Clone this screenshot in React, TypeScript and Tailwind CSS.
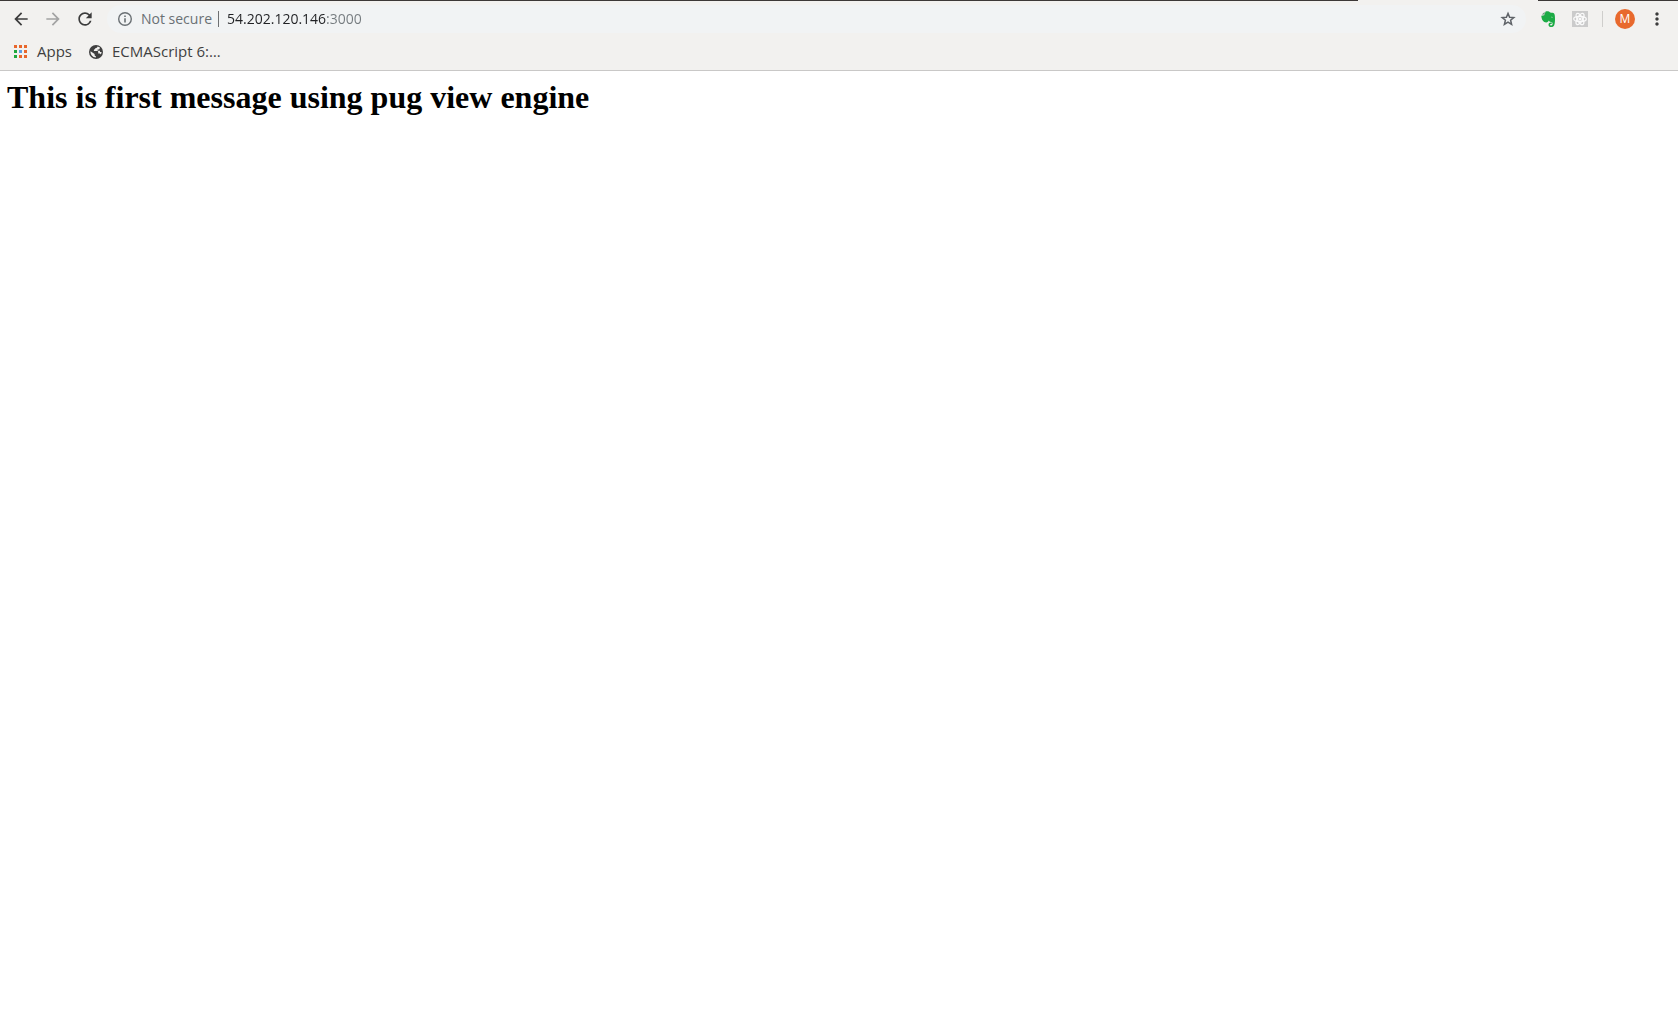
import type { ReactNode } from "react";
import { MdArrowBack, MdArrowForward, MdMoreVert, MdRefresh } from "react-icons/md";

const appDots = [
  "bg-[#e8672c]",
  "bg-[#e8672c]",
  "bg-[#e8672c]",
  "bg-[#1fa83d]",
  "bg-[#5f9de0]",
  "bg-[#e8672c]",
  "bg-[#1fa83d]",
  "bg-[#e8672c]",
  "bg-[#e8672c]",
];

function ToolButton({ label, disabled, children }: { label: string; disabled?: boolean; children: ReactNode }) {
  return (
    <button
      type="button"
      aria-label={label}
      disabled={disabled}
      className="flex h-7 w-8 items-center justify-center text-[#3c3c3c] disabled:text-[#a3a3a3]"
    >
      {children}
    </button>
  );
}

function ElephantIcon() {
  return (
    <svg viewBox="0 0 16 16" className="size-4" aria-hidden="true">
      <path
        d="M5.6 0.6C7 0 9.2.2 10.2 1.4c1.6.2 3.2.4 3.9 1 .8.8.9 3.2.9 5.6 0 3-.3 5.6-1 6.7-.6.9-1.500 1.300-2.800 1.300-1.700 0-2.700-.9-2.700-2.300 0-1.400 1-2.200 2.300-2.200h.9v1.400h-.8c-.6 0-.9.3-.9.8s.4.8 1.100.8c1.100 0 1.500-.7 1.500-2 0-1-.5-1.500-1.600-1.600-1.300-.1-1.900-.4-2.200-1.300-.4 1.200-1.200 1.800-2.600 1.800-2.900 0-4.600-2.500-4.900-6.600L4.200 4.300z"
        fill="#1cab45"
      />
      <path d="M1.800 3.500L4.600.9v2.600z" fill="#5c8f6c" />
      <path d="M10.8 6.300c.2-.8 1.800-.8 2.200.3-.7-.2-1.400-.3-2.200-.3z" fill="#f2f1ef" />
    </svg>
  );
}

function AtomIcon() {
  return (
    <svg viewBox="0 0 16 16" className="size-4" aria-hidden="true">
      <rect width="16" height="16" fill="#cbcbcb" />
      <g fill="none" stroke="#fafafa" strokeWidth="1.3">
        <ellipse cx="8" cy="8" rx="6.3" ry="2.6" />
        <ellipse cx="8" cy="8" rx="6.3" ry="2.6" transform="rotate(60 8 8)" />
        <ellipse cx="8" cy="8" rx="6.3" ry="2.6" transform="rotate(120 8 8)" />
      </g>
      <circle cx="8" cy="8" r="1.5" fill="#fafafa" />
    </svg>
  );
}

function StarIcon() {
  return (
    <svg viewBox="0 0 16 16" className="size-4" aria-hidden="true">
      <path
        d="M8 2.4l1.6 3.9 4.2.3-3.2 2.7 1 4.1L8 11.2l-3.6 2.2 1-4.1-3.2-2.7 4.2-.3z"
        fill="none"
        stroke="currentColor"
        strokeWidth="1.5"
      />
    </svg>
  );
}

function InfoIcon() {
  return (
    <svg viewBox="0 0 16 16" className="size-4" aria-hidden="true">
      <circle cx="8" cy="8" r="6.3" fill="none" stroke="currentColor" strokeWidth="1.4" />
      <path d="M7.200 4.500h1.600v1.600H7.200zM7.200 7.200h1.600v4.300H7.200z" fill="currentColor" />
    </svg>
  );
}

function GlobeIcon() {
  return (
    <svg viewBox="0 0 16 16" className="size-4" aria-hidden="true">
      <circle cx="8" cy="8" r="7" fill="#3f3f3f" />
      <path
        d="M9.500 2.500c-.2 1.200-1 1.400-2 1.600-.3 1-.9 1.300-1.600 1.700v1.200h3.300c.8 0 1 .5 1 1.200v1.200h1c.9 0 1.400.5 1.500 1.200.6-.8.9-1.700.9-2.600h-1.600V6.700H9.600V5.400h1.500l1-1.700C11.400 3.100 10.500 2.700 9.500 2.500zM2.500 7.200c-.3 3.200 2 6.100 5.400 6.300v-1.300c-.9 0-1.300-.6-1.300-1.400v-.7z"
        fill="#f2f1ef"
      />
    </svg>
  );
}

function AddressBar() {
  return (
    <form className="flex h-7 min-w-0 flex-1 items-center rounded-full bg-[#f1f3f4] px-2.5 text-sm">
      <button type="button" className="flex items-center gap-2 text-[#6a7074]">
        <InfoIcon />
        <span className="whitespace-nowrap">Not secure</span>
      </button>
      <span className="ml-1.5 h-4 w-px bg-[#6e7072]" />
      <input
        type="text"
        aria-label="Address"
        defaultValue="54.202.120.146:3000"
        spellCheck={false}
        className="ml-2 min-w-0 flex-1 bg-[linear-gradient(90deg,#202124_100px,#747a7e_100px)] bg-clip-text text-transparent caret-black outline-none"
      />
      <button type="button" aria-label="Bookmark this page" className="text-[#5f6368]">
        <StarIcon />
      </button>
    </form>
  );
}

export default function App() {
  return (
    <div className="min-h-screen bg-white font-['Open_Sans',sans-serif]">
      <header className="border-b border-[#c9c8c7] bg-[#f2f1ef] pb-1">
        <div className="flex h-px">
          <span className="flex-1 bg-[#3c3837]" />
          <span className="w-[180px]" />
          <span className="w-[140px] bg-[#3c3837]" />
        </div>
        <div className="flex h-9 items-center pr-[5px] pl-[5px]">
          <ToolButton label="Back">
            <MdArrowBack className="size-5" />
          </ToolButton>
          <ToolButton label="Forward" disabled>
            <MdArrowForward className="size-5" />
          </ToolButton>
          <ToolButton label="Reload">
            <MdRefresh className="size-5" />
          </ToolButton>
          <div className="ml-1.5 flex min-w-0 flex-1">
            <AddressBar />
          </div>
          <div className="ml-1.5 flex items-center">
            <ToolButton label="Evernote Web Clipper">
              <ElephantIcon />
            </ToolButton>
            <ToolButton label="React Developer Tools">
              <AtomIcon />
            </ToolButton>
            <span className="ml-1.5 h-4 w-px bg-[#cfcecc]" />
            <button
              type="button"
              aria-label="Profile"
              className="mr-1.5 ml-3 flex size-5 items-center justify-center rounded-full bg-[#e8692d] text-xs text-white"
            >
              M
            </button>
            <ToolButton label="Menu">
              <MdMoreVert className="size-5" />
            </ToolButton>
          </div>
        </div>
        <nav aria-label="Bookmarks" className="flex h-[29px] items-center gap-4 px-3.5 text-[15px] text-[#3f3f3f]">
          <a href="#apps" className="flex items-center gap-2.5">
            <span className="grid grid-cols-3 gap-0.5">
              {appDots.map((color, i) => (
                <span key={i} className={`size-[3px] ${color}`} />
              ))}
            </span>
            Apps
          </a>
          <a href="#ecmascript" className="flex items-center gap-2">
            <GlobeIcon />
            ECMAScript 6:…
          </a>
        </nav>
      </header>
      <main className="px-[7px] py-2">
        <h1 className="font-['Liberation_Serif',serif] text-[32px] leading-9 font-bold text-black">
          This is first message using pug view engine
        </h1>
      </main>
    </div>
  );
}
